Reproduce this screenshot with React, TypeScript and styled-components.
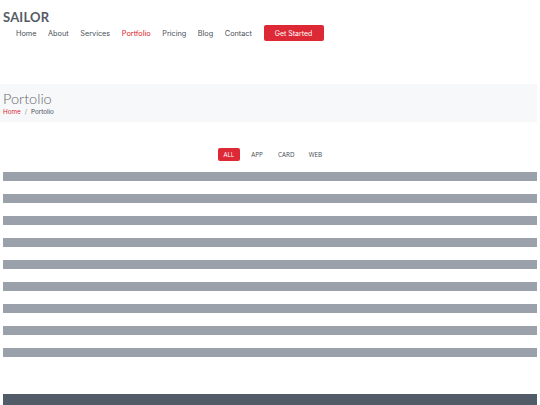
import styled, { createGlobalStyle } from 'styled-components';

const GlobalStyle = createGlobalStyle`
  * { box-sizing: border-box; }
  body {
    margin: 0;
    background: #ffffff;
    font-family: "Open Sans", "Liberation Sans", sans-serif;
    color: #444444;
  }
`;

const Header = styled.header`
  padding: 9px 3px 0 3px;
`;

const Logo = styled.div`
  font-family: "Lato", "Open Sans", sans-serif;
  font-weight: 700;
  font-size: 13px;
  letter-spacing: 0.2px;
  color: #545a64;
  line-height: 16px;
`;

const Nav = styled.nav`
  display: flex;
  align-items: center;
  gap: 11.6px;
  padding-left: 13px;
  height: 16px;
`;

const NavLink = styled.a<{ $active?: boolean }>`
  font-family: "Inter", "Open Sans", sans-serif;
  font-size: 7.3px;
  color: ${(p) => (p.$active ? '#d9232d' : '#4a4f58')};
  text-decoration: none;
`;

const StartButton = styled.a`
  display: flex;
  align-items: center;
  justify-content: center;
  width: 60px;
  height: 16px;
  background: #dc2935;
  border-radius: 2px;
  color: #ffffff;
  font-family: "Inter", "Open Sans", sans-serif;
  font-size: 7px;
  text-decoration: none;
`;

const Breadcrumbs = styled.section`
  margin-top: 43px;
  margin-right: 3px;
  background: #f7f8fa;
  padding: 7px 3px 7px 3px;
  height: 38px;
`;

const PageTitle = styled.h2`
  margin: 0;
  font-family: "Lato", "Open Sans", sans-serif;
  font-weight: 300;
  font-size: 14.5px;
  line-height: 16px;
  color: #65686e;
`;

const Crumbs = styled.ol`
  display: flex;
  gap: 4px;
  list-style: none;
  margin: 1px 0 0 0;
  padding: 0;
  font-family: "Inter", "Open Sans", sans-serif;
  font-size: 6.3px;
  line-height: 8px;
`;

const Crumb = styled.li<{ $link?: boolean; $sep?: boolean }>`
  color: ${(p) => (p.$link ? '#d9232d' : p.$sep ? '#8a8f96' : '#444a52')};
`;

const Portfolio = styled.section`
  padding: 26px 3px 0 3px;
`;

const Filters = styled.ul`
  display: flex;
  justify-content: center;
  gap: 6px;
  list-style: none;
  margin: 0 0 11px 0;
  padding: 0 0 0 4px;
`;

const Filter = styled.li<{ $active?: boolean }>`
  display: flex;
  align-items: center;
  justify-content: center;
  height: 13px;
  padding: 0 ${(p) => (p.$active ? '6px' : '4px')};
  min-width: 22px;
  border-radius: 2px;
  background: ${(p) => (p.$active ? '#dc2935' : 'transparent')};
  color: ${(p) => (p.$active ? '#ffffff' : '#444a52')};
  font-family: "Open Sans", sans-serif;
  font-size: 6.3px;
  font-weight: 500;
`;

const Items = styled.div`
  display: flex;
  flex-direction: column;
  gap: 13px;
`;

const ItemBar = styled.div`
  height: 9px;
  background: #9aa1aa;
`;

const Footer = styled.footer`
  margin: 37px 3px 0 3px;
  height: 11px;
  background: #525c68;
`;

const navItems = ['Home', 'About', 'Services', 'Portfolio', 'Pricing', 'Blog', 'Contact'];
const filters = ['ALL', 'APP', 'CARD', 'WEB'];

export default function App() {
  return (
    <>
      <GlobalStyle />
      <Header>
        <Logo>SAILOR</Logo>
        <Nav>
          {navItems.map((n) => (
            <NavLink key={n} $active={n === 'Portfolio'}>{n}</NavLink>
          ))}
          <StartButton>Get Started</StartButton>
        </Nav>
      </Header>
      <Breadcrumbs>
        <PageTitle>Portolio</PageTitle>
        <Crumbs>
          <Crumb $link>Home</Crumb>
          <Crumb $sep>/</Crumb>
          <Crumb>Portolio</Crumb>
        </Crumbs>
      </Breadcrumbs>
      <Portfolio>
        <Filters>
          {filters.map((f) => (
            <Filter key={f} $active={f === 'ALL'}>{f}</Filter>
          ))}
        </Filters>
        <Items>
          {Array.from({ length: 9 }).map((_, i) => (
            <ItemBar key={i} />
          ))}
        </Items>
      </Portfolio>
      <Footer />
    </>
  );
}
